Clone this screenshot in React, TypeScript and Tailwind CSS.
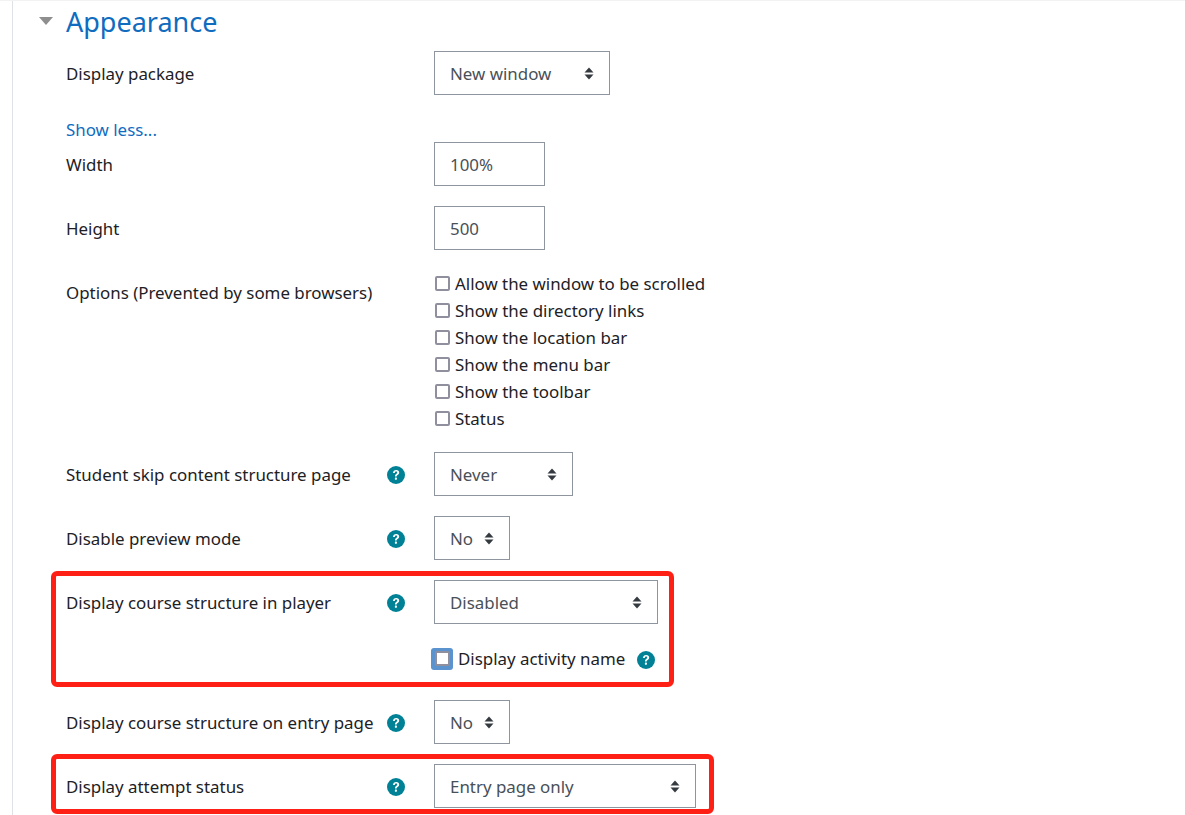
import type { ReactNode } from "react";

const font = "font-['Noto_Sans','Open_Sans',sans-serif]";

function Help() {
  return (
    <svg width="18" height="18" viewBox="0 0 18 18" className="mt-[2px] shrink-0">
      <circle cx="9" cy="9" r="9" fill="#008196" />
      <path
        d="M5.9 7c.2-1.9 1.5-3 3.3-3 1.8 0 3 1 3 2.5 0 1.2-.7 1.8-1.5 2.4-.7.5-1 .8-1 1.6H8c-.1-1.3.3-1.9 1.2-2.6.7-.5 1-.8 1-1.3 0-.6-.4-1-1.1-1-.7 0-1.2.5-1.3 1.4H5.9z"
        fill="#fff"
      />
      <rect x="7.9" y="11.6" width="2" height="2.1" rx=".4" fill="#fff" />
    </svg>
  );
}

function Arrows() {
  return (
    <svg width="10" height="13" viewBox="0 0 10 13" className="shrink-0">
      <path d="M5 0.5 9.5 5.5H.5z" fill="#343a40" />
      <path d="M5 12.5.5 7.5h9z" fill="#343a40" />
    </svg>
  );
}

function Select({ value, width }: { value: string; width: string }) {
  return (
    <div className={`flex h-11 items-center justify-between border border-[#8f959e] bg-white px-[15px] text-[#495057] ${width}`}>
      <span className="pt-px">{value}</span>
      <Arrows />
    </div>
  );
}

function Input({ value }: { value: string }) {
  return (
    <div className="flex h-11 w-[111px] items-center border border-[#8f959e] bg-white pl-[15px] pt-px text-[#495057]">
      {value}
    </div>
  );
}

function Row({ label, help, children }: { label: string; help?: boolean; children: ReactNode }) {
  return (
    <div className="mb-5 flex">
      <div className="flex h-11 w-[368px] shrink-0 items-center">
        <span className="w-[321px] shrink-0 whitespace-nowrap pt-px">{label}</span>
        {help && <Help />}
      </div>
      {children}
    </div>
  );
}

function Check({ label }: { label: string }) {
  return (
    <div className="flex h-[27px] items-center gap-[5px] whitespace-nowrap">
      <span className="h-[15px] w-[15px] shrink-0 rounded-[2px] border-2 border-[#8f8f9d] bg-white" />
      <span className="pt-px">{label}</span>
    </div>
  );
}

export default function App() {
  const options = [
    "Allow the window to be scrolled",
    "Show the directory links",
    "Show the location bar",
    "Show the menu bar",
    "Show the toolbar",
    "Status",
  ];

  return (
    <div className={`relative h-[815px] overflow-hidden border-t border-[#f2f2f2] bg-white text-[16.9px] text-[#1d2125] ${font}`}>
      <div className="ml-3 h-full border-l border-[#dee2e6] pl-[26px]">
        <div className="flex h-[50px] items-start pt-[15px]">
          <span className="mt-px h-0 w-0 border-x-[7px] border-t-[8px] border-x-transparent border-t-[#8e8e8e]" />
          <h2 className="-mt-[16px] ml-[13px] text-[27px] leading-[44px] text-[#0f6cbf]">Appearance</h2>
        </div>

        <div className="pl-[27px]">
          <Row label="Display package">
            <Select value="New window" width="w-[176px]" />
          </Row>

          <div className="h-[27px] pt-[2px] leading-[25px] text-[#0f6cbf]">Show less...</div>

          <Row label="Width">
            <Input value="100%" />
          </Row>
          <Row label="Height">
            <Input value="500" />
          </Row>

          <div className="mb-5 flex">
            <div className="flex h-11 w-[368px] shrink-0 items-center pt-px">Options (Prevented by some browsers)</div>
            <div className="pl-[1px]">
              {options.map((o) => (
                <Check key={o} label={o} />
              ))}
            </div>
          </div>

          <Row label="Student skip content structure page" help>
            <Select value="Never" width="w-[139px]" />
          </Row>
          <Row label="Disable preview mode" help>
            <Select value="No" width="w-[76px]" />
          </Row>

          <div className="mb-5 h-[100px]">
            <Row label="Display course structure in player" help>
              <Select value="Disabled" width="w-[224px]" />
            </Row>
            <div className="ml-[365px] flex items-center whitespace-nowrap pt-[2px]">
              <span className="flex h-[22px] w-[22px] shrink-0 items-center justify-center rounded-[3px] bg-[#5b93ce]">
                <span className="h-[15px] w-[15px] rounded-[2px] border-2 border-[#8f8f9d] bg-white" />
              </span>
              <span className="ml-[5px] mr-[12px]">Display activity name</span>
              <Help />
            </div>
          </div>

          <Row label="Display course structure on entry page" help>
            <Select value="No" width="w-[76px]" />
          </Row>
          <Row label="Display attempt status" help>
            <Select value="Entry page only" width="w-[262px]" />
          </Row>
        </div>
      </div>

      <div className="absolute left-[51px] top-[570px] h-[116px] w-[623px] rounded-[6px] border-[5px] border-[#ff2015]" />
      <div className="absolute left-[51px] top-[753px] h-[60px] w-[663px] rounded-[6px] border-[5px] border-[#ff2015]" />
    </div>
  );
}
